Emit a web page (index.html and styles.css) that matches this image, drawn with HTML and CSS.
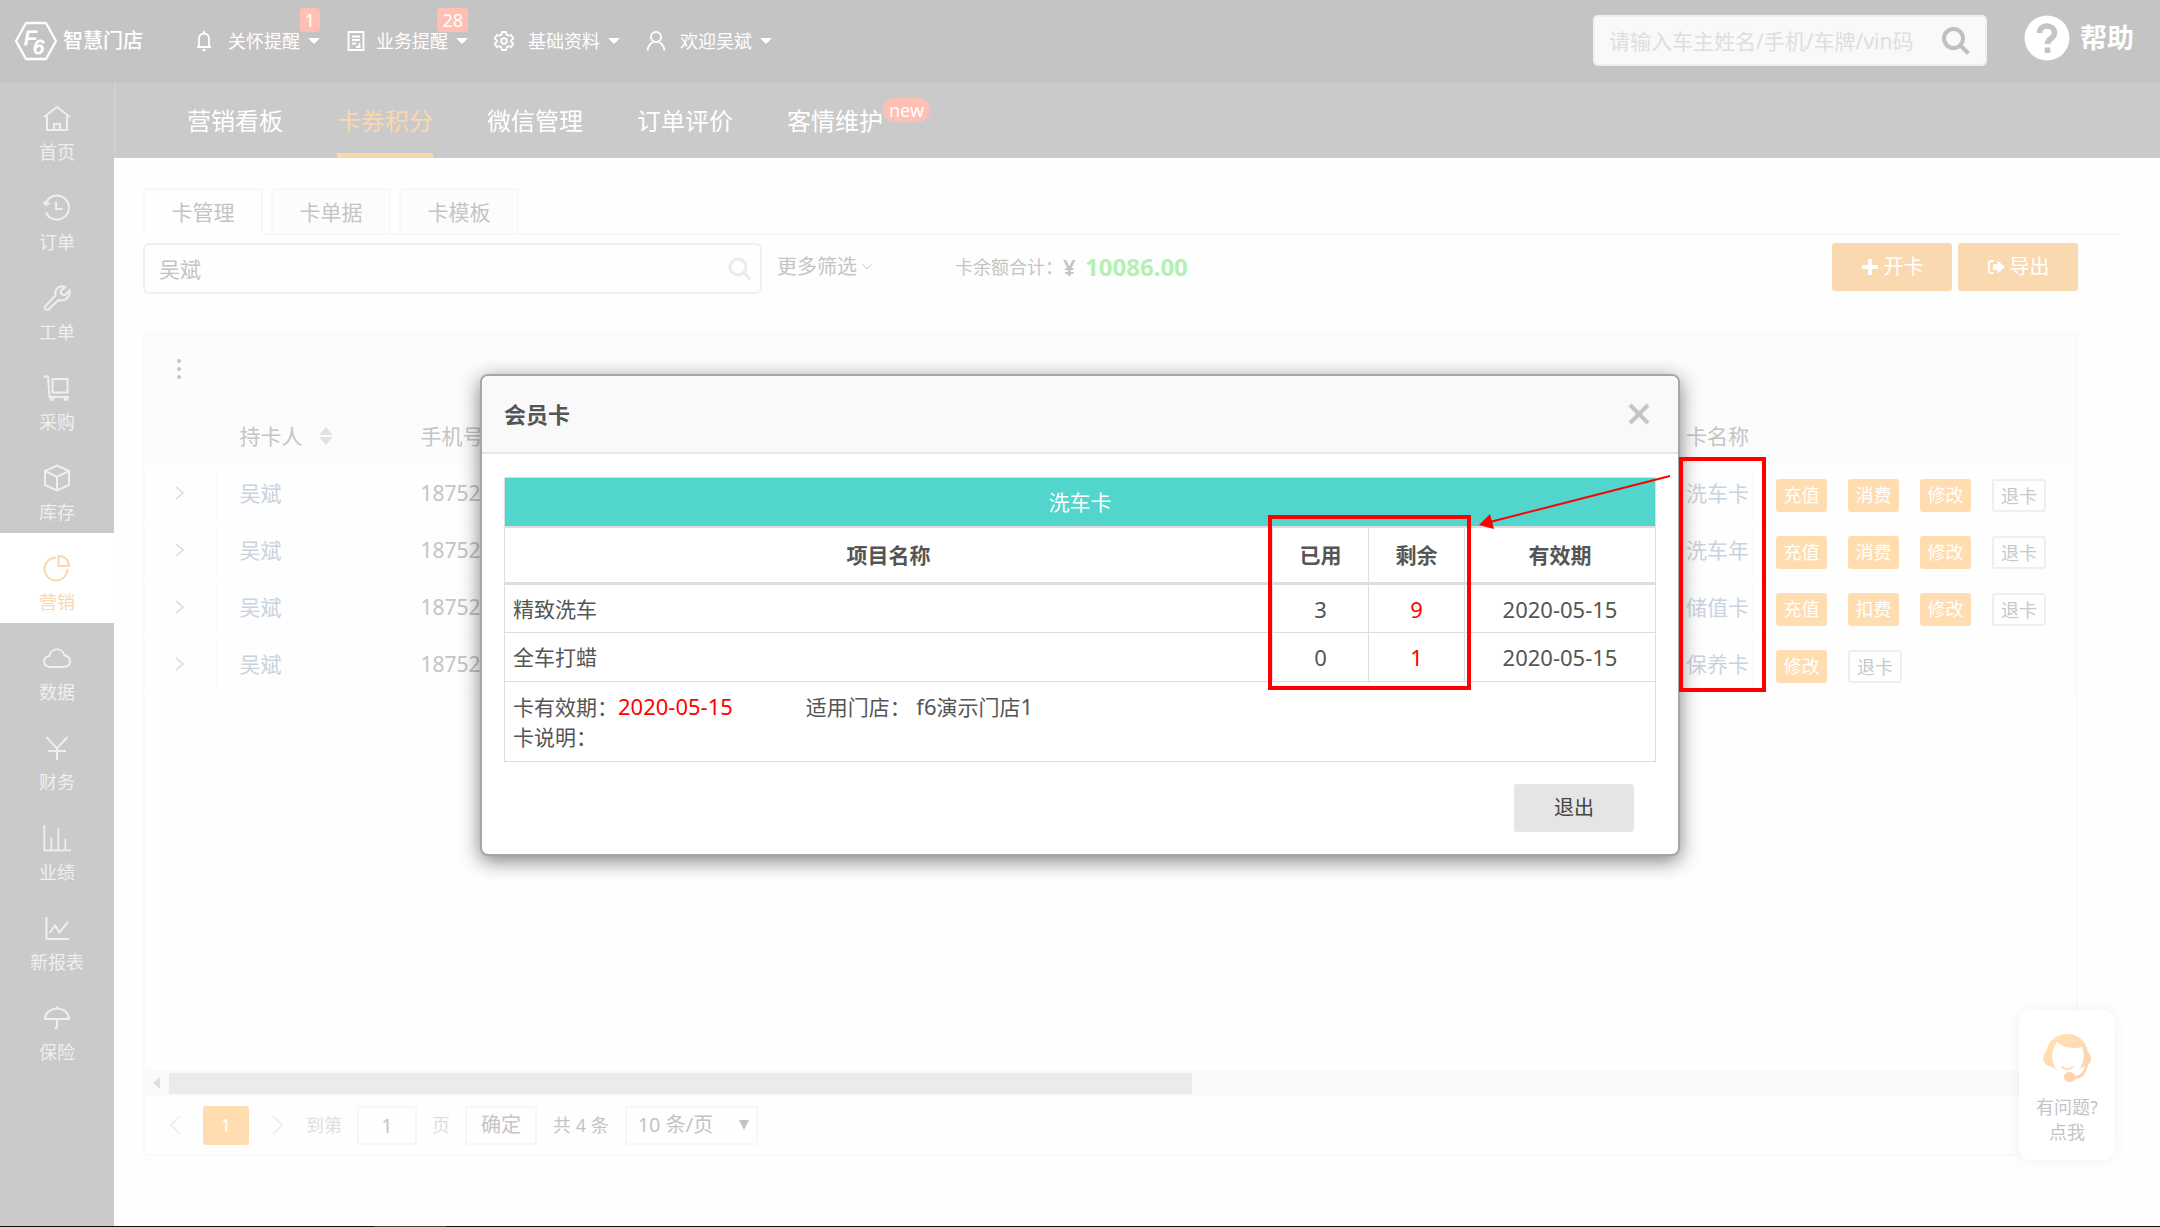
FILE: index.html
```html
<!DOCTYPE html>
<html lang="zh-CN">
<head>
<meta charset="utf-8">
<meta name="viewport" content="width=device-width, initial-scale=1">
<title>智慧门店 - 卡券积分</title>
<link rel="stylesheet" href="styles.css">
</head>
<body>
<header class="topbar">
  <a class="brand" href="#">
    <svg class="brand-mark" viewBox="0 0 44 40" aria-hidden="true">
      <path d="M12 2h20l10 18-10 18H12L2 20z" fill="none" stroke="#fff" stroke-width="2.4" stroke-linejoin="round"/>
      <text x="10" y="24" class="brand-letter">F</text>
      <text x="19" y="33" class="brand-letter">6</text>
    </svg>
    <span class="brand-name">智慧门店</span>
  </a>
  <nav class="topnav">
    <a class="topnav-item" href="#">
      <svg class="ico" viewBox="0 0 20 20"><path d="M10 0v2M5 16V7.500a5 5 0 0 1 10 0V16M3 16h14M8.500 19h3"/></svg>
      <span>关怀提醒</span><i class="caret"></i><b class="badge">1</b>
    </a>
    <a class="topnav-item topnav-item-tight" href="#">
      <svg class="ico" viewBox="0 0 20 20"><path d="M2.500 1h15v18h-15zM6 5.500h8M6 9h8M6 12.500h4M13.500 12v4H10"/></svg>
      <span>业务提醒</span><i class="caret"></i><b class="badge">28</b>
    </a>
    <a class="topnav-item" href="#">
      <svg class="ico" viewBox="0 0 20 20"><path d="M8 1h4l.6 2.600 2 1.200 2.600-.8 2 3.400-2 1.900v1.400l2 1.900-2 3.400-2.600-.8-2 1.200L12 19H8l-.6-2.600-2-1.200-2.600.8-2-3.400 2-1.900V9.300l-2-1.900 2-3.400 2.600.8 2-1.200z"/><circle cx="10" cy="10" r="2.800"/></svg>
      <span>基础资料</span><i class="caret"></i>
    </a>
    <a class="topnav-item" href="#">
      <svg class="ico" viewBox="0 0 20 20"><circle cx="10" cy="6" r="5"/><path d="M1.500 19.500c.5-5 3-7 5.500-8.500M18.500 19.500c-.5-5-3-7-5.500-8.500"/></svg>
      <span>欢迎吴斌</span><i class="caret"></i>
    </a>
  </nav>
  <form class="global-search">
    <input type="text" aria-label="搜索" placeholder="请输入车主姓名/手机/车牌/vin码">
    <button type="button" aria-label="搜索"><svg viewBox="0 0 30 30"><circle cx="12.500" cy="12.500" r="9.500"/><path d="M19.500 19.500l8 8"/></svg></button>
  </form>
  <a class="help" href="#">
    <svg viewBox="0 0 46 46" aria-hidden="true"><circle cx="23" cy="23" r="22.500" fill="#fff"/><path d="M15.500 18c0-9.500 15-9 15 0 0 5.500-7 5.500-7 11" fill="none" stroke="#c4c4c4" stroke-width="5.500"/><path d="M20.700 32.500h5.600V38h-5.600z" fill="#c4c4c4"/></svg>
    <span>帮助</span>
  </a>
</header>

<div class="shell">
  <aside class="sidebar">
    <a class="side-item" href="#"><svg viewBox="0 0 28 28"><path d="M1 13L14 3l13 10M4 11.500V26h20V11.500M11 26v-6h6v6"/></svg>首页</a>
    <a class="side-item" href="#"><svg viewBox="0 0 28 28"><path d="M2.500 10a12 12 0 1 1 .5 8.500M.5 8l2.500 3 3.500-2M13 8v7h6.500"/></svg>订单</a>
    <a class="side-item" href="#"><svg viewBox="0 0 28 28"><path d="M22 3c-5-2-11 1.500-9.500 8.500L2 22.500c-1 3 2 4 3.500 3L15.500 16c6 2 12-2.500 11-9.500L22 11c-3 .5-5-2-4-4.500z"/></svg>工单</a>
    <a class="side-item" href="#"><svg viewBox="0 0 28 28"><path d="M.5 2.500H5L6.500 23H26M9.500 5h15v13.500h-15z"/><circle cx="9" cy="24.500" r="1.500"/><circle cx="23" cy="24.500" r="1.500"/></svg>采购</a>
    <a class="side-item" href="#"><svg viewBox="0 0 28 28"><path d="M14 1.500l12 5.500v14L14 26.500 2 21V7zM2 7l12 6 12-6M14 13v13.500"/></svg>库存</a>
    <a class="side-item side-item-active" href="#"><svg viewBox="0 0 28 28"><path d="M13 3.500A11.500 11.500 0 1 0 24.500 15M15.500 2v10H26c0-6-4.500-10-10.500-10z"/></svg>营销</a>
    <a class="side-item" href="#"><svg viewBox="0 0 28 28"><path d="M7 23C-1 22-.5 13 6.500 12 7.500 3.500 19.500 3 21.500 11.500c7 1 7.500 10.500 0 11.500z"/></svg>数据</a>
    <a class="side-item" href="#"><svg viewBox="0 0 28 28"><path d="M3.500 3L14 14.500 24.500 3M5 17h18M14 14.500V26"/></svg>财务</a>
    <a class="side-item" href="#"><svg class="wide" viewBox="0 0 32 32"><path d="M1.500 1v29H32M9.500 29V15M17.500 29V5M25.500 29V17"/></svg>业绩</a>
    <a class="side-item" href="#"><svg viewBox="0 0 28 28"><path d="M3.500 3v22H26M6.500 19L12 11.500l4.500 7L25 8"/></svg>新报表</a>
    <a class="side-item" href="#"><svg viewBox="0 0 28 28"><path d="M2 15C3 1 25 1 26 15zM14 4.500V2.500M14 15v7.500c0 1.500-1 2-2.500 2"/></svg>保险</a>
  </aside>

  <main class="main">
    <nav class="tabs">
      <a href="#">营销看板</a>
      <a href="#" class="tabs-active">卡券积分</a>
      <a href="#">微信管理</a>
      <a href="#">订单评价</a>
      <a href="#">客情维护<b class="new-badge">new</b></a>
    </nav>

    <section class="content">
      <nav class="subtabs">
        <a class="subtab-active" href="#">卡管理</a>
        <a href="#">卡单据</a>
        <a href="#">卡模板</a>
      </nav>
      <div class="filters">
        <div class="filter-search">
          <input type="text" aria-label="查询会员卡" value="吴斌">
          <svg viewBox="0 0 24 24"><circle cx="10" cy="10" r="8"/><path d="M16 16l6.500 6.500"/></svg>
        </div>
        <a class="more" href="#">更多筛选<svg viewBox="0 0 12 12"><path d="M1.500 3.500L6 8l4.500-4.500"/></svg></a>
        <p class="total">卡余额合计：<span class="yen">¥</span><strong>10086.00</strong></p>
        <div class="filter-actions">
          <button type="button" class="btn-main"><svg viewBox="0 0 18 18"><path d="M7 1h4v6h6v4h-6v6H7v-6H1V7h6z"/></svg>开卡</button>
          <button type="button" class="btn-main"><svg viewBox="0 0 18 18"><path d="M7 2H4a3 3 0 0 0-3 3v8a3 3 0 0 0 3 3h3v-2H4.500A1.500 1.500 0 0 1 3 12.500v-7A1.500 1.500 0 0 1 4.500 4H7zM10.500 2.500L18 9l-7.500 6.500V12H6V6h4.500z"/></svg>导出</button>
        </div>
      </div>

      <div class="panel">
        <div class="panel-tools"><button type="button" class="dots" aria-label="列设置"><i></i><i></i><i></i></button></div>
        <table class="cards">
          <colgroup><col class="c-open"><col class="c-holder"><col><col class="c-name"><col class="c-act"></colgroup>
          <thead>
            <tr><th></th><th><span class="sortable">持卡人<svg viewBox="0 0 16 20"><path d="M8 1l7 8H1zM8 19l-7-8h14z"/></svg></span></th><th>手机号</th><th>卡名称</th><th></th></tr>
          </thead>
          <tbody>
            <tr><td><button type="button" class="open" aria-label="展开"><svg viewBox="0 0 12 16"><path d="M2 2l7 6-7 6"/></svg></button></td><td><a href="#">吴斌</a></td><td>18752</td><td><a href="#">洗车卡</a></td>
              <td><div class="acts"><button type="button">充值</button><button type="button">消费</button><button type="button">修改</button><button type="button" class="plain">退卡</button></div></td></tr>
            <tr><td><button type="button" class="open" aria-label="展开"><svg viewBox="0 0 12 16"><path d="M2 2l7 6-7 6"/></svg></button></td><td><a href="#">吴斌</a></td><td>18752</td><td><a href="#">洗车年</a></td>
              <td><div class="acts"><button type="button">充值</button><button type="button">消费</button><button type="button">修改</button><button type="button" class="plain">退卡</button></div></td></tr>
            <tr><td><button type="button" class="open" aria-label="展开"><svg viewBox="0 0 12 16"><path d="M2 2l7 6-7 6"/></svg></button></td><td><a href="#">吴斌</a></td><td>18752</td><td><a href="#">储值卡</a></td>
              <td><div class="acts"><button type="button">充值</button><button type="button">扣费</button><button type="button">修改</button><button type="button" class="plain">退卡</button></div></td></tr>
            <tr><td><button type="button" class="open" aria-label="展开"><svg viewBox="0 0 12 16"><path d="M2 2l7 6-7 6"/></svg></button></td><td><a href="#">吴斌</a></td><td>18752</td><td><a href="#">保养卡</a></td>
              <td><div class="acts"><button type="button">修改</button><button type="button" class="plain">退卡</button></div></td></tr>
          </tbody>
        </table>
        <div class="hscroll"><i class="hscroll-arrow"></i><div class="hscroll-thumb"></div></div>
        <div class="pager">
          <button type="button" class="page-step" aria-label="上一页"><svg viewBox="0 0 12 20"><path d="M11 1L2 10l9 9"/></svg></button>
          <button type="button" class="page-now">1</button>
          <button type="button" class="page-step" aria-label="下一页"><svg viewBox="0 0 12 20"><path d="M1 1l9 9-9 9"/></svg></button>
          <label class="page-jump">到第<input type="text" value="1">页</label>
          <button type="button" class="page-ok">确定</button>
          <span class="page-count">共 4 条</span>
          <span class="page-size"><select aria-label="每页条数"><option>10 条/页</option></select><svg viewBox="0 0 10 10"><path d="M0 0h10L5 10z"/></svg></span>
        </div>
      </div>
    </section>
  </main>
</div>
<div class="taskbar"><i></i></div>

<a class="service" href="#">
  <svg viewBox="0 0 48 48" aria-hidden="true">
    <defs><linearGradient id="hair" x1="0" y1="0" x2="1" y2="1"><stop offset="0" stop-color="#ffe6b3"/><stop offset="1" stop-color="#ffcdb0"/></linearGradient></defs>
    <path fill="url(#hair)" d="M24 0C13 0 5 7 3 18c-5 4-3 13 4 14l7 4c-6-7-7-18 0-28 7 6 16 7 25 5 3 8 2 16-3 22l6-3c-2 6-5 10-10 10-1-6-11-5-11 1s9 7 11 2c7 0 11-5 13-14 4-3 4-9 0-13C43 7 35 0 24 0z"/>
    <path d="M18.500 32.500c3.500 3.500 8 3.500 11.500 0" fill="none" stroke="#ffd9b3" stroke-width="2"/>
  </svg>
  <span>有问题?</span><span>点我</span>
</a>

<div class="overlay">
  <section class="dialog" role="dialog" aria-labelledby="dialog-title">
    <header class="dialog-head">
      <h2 id="dialog-title">会员卡</h2>
      <button type="button" aria-label="关闭"><svg viewBox="0 0 22 22"><path d="M2 2l18 18M20 2L2 20"/></svg></button>
    </header>
    <div class="dialog-body">
      <table class="detail">
        <colgroup><col><col class="d-num"><col class="d-num"><col class="d-date"></colgroup>
        <thead>
          <tr class="detail-title"><th colspan="4">洗车卡</th></tr>
          <tr class="detail-cols"><th>项目名称</th><th>已用</th><th>剩余</th><th>有效期</th></tr>
        </thead>
        <tbody>
          <tr><td>精致洗车</td><td class="num">3</td><td class="num red">9</td><td class="num">2020-05-15</td></tr>
          <tr><td>全车打蜡</td><td class="num">0</td><td class="num red">1</td><td class="num">2020-05-15</td></tr>
        </tbody>
        <tfoot>
          <tr><td colspan="4">
            <div class="detail-meta"><span>卡有效期：<em class="num red">2020-05-15</em></span><span>适用门店： <em class="num">f6</em>演示门店<em class="num">1</em></span></div>
            <div>卡说明：</div>
          </td></tr>
        </tfoot>
      </table>
    </div>
    <footer class="dialog-foot"><button type="button">退出</button></footer>
    <svg class="marks" viewBox="0 0 504 240" aria-hidden="true">
      <path d="M4 61h199v171H4zM415 3h83v231h-83z" fill="none" stroke="#f00" stroke-width="4"/>
      <path d="M404 20L224 66" fill="none" stroke="#f00" stroke-width="2"/>
      <path d="M213 69l11-11 4 15z" fill="#f00"/>
    </svg>
  </section>
</div>
</body>
</html>
```
FILE: styles.css
```css
* { box-sizing: border-box; }

body {
  margin: 0;
  min-height: 100vh;
  display: flex;
  flex-direction: column;
  position: relative;
  background: #fefefe;
  color: #c4c4c4;
  font-family: "Noto Sans", "Noto Sans CJK SC", sans-serif;
  font-size: 21px;
  line-height: 30px;
}

a { color: inherit; text-decoration: none; }
button, input, select { font: inherit; color: inherit; margin: 0; padding: 0; border: 0; background: none; }
svg { display: block; flex: none; }
i, em { font-style: normal; }

/* top bar */
.topbar {
  height: 83px;
  display: flex;
  align-items: center;
  padding: 0 26px 2px 14px;
  background: #c4c4c4;
  color: #fff;
}
.brand { display: flex; align-items: center; gap: 5px; width: 180px; }
.brand-mark { width: 44px; height: 40px; }
.brand-letter { font: italic 20px "Liberation Sans", sans-serif; fill: #fff; stroke: #fff; stroke-width: 1; }
.brand-name { font-size: 20px; font-weight: 500; white-space: nowrap; }
.topnav { display: flex; gap: 26px; font-size: 18px; line-height: 24px; white-space: nowrap; }
.topnav-item { position: relative; display: flex; align-items: center; gap: 14px; }
.topnav-item-tight { gap: 10px; }
.ico { width: 20px; height: 20px; fill: none; stroke: #fff; stroke-width: 1.8; }
.caret { width: 12px; border: 6px solid transparent; border-top-color: #fff; border-bottom: 0; }
.topnav-item .caret { margin-left: -6px; }
.topnav-item-tight .caret { margin-left: -2px; }
.badge {
  position: absolute;
  right: 0;
  top: -21px;
  padding: 0 5px;
  border-radius: 4px;
  background: #ffc0b3;
  font-weight: 400;
}
.global-search {
  display: flex;
  align-items: center;
  width: 394px;
  height: 51px;
  margin: 0 37px 0 auto;
  padding: 0 14px;
  border: 2px solid #efefef;
  border-radius: 5px;
  background: #f9f9f9;
}
.global-search input { flex: 1; min-width: 0; font-size: 21px; outline: 0; }
.global-search input::placeholder { color: #dedede; opacity: 1; }
.global-search svg { width: 30px; height: 30px; fill: none; stroke: #c0c0c0; stroke-width: 4; }
.help { display: flex; align-items: center; gap: 10px; padding-bottom: 6px; font-size: 27px; font-weight: 700; white-space: nowrap; }
.help svg { width: 46px; height: 46px; }

/* side bar */
.shell { flex: 1; display: flex; }
.sidebar { flex: none; width: 114px; background: #cacaca; color: #efefef; font-size: 18px; line-height: 24px; }
.side-item { display: flex; flex-direction: column; align-items: center; justify-content: center; gap: 8px; height: 90px; padding-top: 12px; }
.side-item svg { width: 28px; height: 28px; fill: none; stroke: currentColor; stroke-width: 2; }
.side-item .wide { width: 32px; }
.side-item-active { background: #fff; color: #fbd7ae; }

/* module tabs */
.main { flex: 1; min-width: 0; display: flex; flex-direction: column; }
.tabs {
  display: flex;
  gap: 54px;
  height: 75px;
  padding-left: 71px;
  border-left: 2px solid #d0d0d0;
  background: #cacaca;
  color: #fff;
  font-size: 24px;
  line-height: 76px;
}
.tabs a { position: relative; height: 75px; white-space: nowrap; }
.tabs-active { color: #fbd7ae; box-shadow: inset 0 -5px #fbd7ae; }
.new-badge {
  position: absolute;
  left: 100%;
  top: 15px;
  padding: 0 6px;
  border-radius: 12px;
  background: #ffc0b3;
  font-size: 18px;
  font-weight: 400;
  line-height: 24px;
}

/* filters */
.content { flex: 1; display: flex; flex-direction: column; padding: 30px 82px 70px 29px; }
.subtabs { display: flex; gap: 8px; margin-right: -45px; border-bottom: 2px solid #f9f9f9; }
.subtabs a { width: 120px; height: 47px; margin-bottom: -2px; border: 2px solid #f8f8f8; background: #fcfcfc; line-height: 44px; text-align: center; }
.subtabs .subtab-active { background: #fefefe; border-bottom-color: #fefefe; }
.filters { display: flex; align-items: flex-start; margin: 8px 0 38px; line-height: 48px; }
.filter-search { display: flex; align-items: center; width: 619px; height: 51px; padding: 0 8px 0 14px; border: 2px solid #f0f0f0; border-radius: 6px; }
.filter-search input { flex: 1; min-width: 0; outline: 0; }
.filter-search svg { width: 24px; height: 24px; fill: none; stroke: #ebebeb; stroke-width: 3; }
.more { display: flex; align-items: center; gap: 4px; width: 178px; margin-left: 15px; font-size: 20px; }
.more svg { width: 12px; height: 12px; fill: none; stroke: #c4c4c4; stroke-width: 1; }
.total { display: flex; margin: 0; font-size: 18px; line-height: 48px; }
.yen { width: 22px; font-size: 22px; font-weight: 600; }
.total strong { color: #b3f0b3; font-size: 24px; }
.filter-actions { display: flex; gap: 6px; margin-left: auto; }
.btn-main {
  display: flex;
  align-items: center;
  justify-content: center;
  gap: 5px;
  width: 120px;
  height: 48px;
  border-radius: 3px;
  background: #fbd9b0;
  color: #fff;
  font-size: 20px;
}
.btn-main svg { width: 18px; height: 18px; fill: #fff; }

/* card list */
.panel { flex: 1; display: flex; flex-direction: column; border: 2px solid #fafafa; border-top-width: 1px; }
.panel-tools { height: 74px; background: #fcfcfc; }
.dots { display: grid; gap: 4px; padding: 26px 32px; }
.dots i { width: 4px; height: 4px; border-radius: 2px; background: #c4c4c4; }
.cards { width: 100%; table-layout: fixed; border-collapse: collapse; }
.c-open { width: 71px; }
.c-holder { width: 181px; }
.c-name { width: 90px; }
.c-act { width: 323px; }
.cards th, .cards td {
  height: 57px;
  padding: 0 0 0 23px;
  border: 1px solid #fafafa;
  border-left: 0;
  text-align: left;
  white-space: nowrap;
  font-weight: 400;
}
.cards th { background: #fcfcfc; }
.cards td a { color: #c9d3de; }
.cards td:first-child { padding-left: 29px; }
.cards td:last-child { padding-top: 4px; }
.open svg { width: 12px; height: 16px; fill: none; stroke: #dadada; stroke-width: 1.5; }
.sortable { display: flex; align-items: center; gap: 15px; }
.sortable svg { width: 16px; height: 20px; fill: #e2e2e2; }
.acts { display: flex; gap: 21px; font-size: 18px; line-height: 32px; }
.acts button { width: 51px; height: 33px; border-radius: 3px; background: #ffddb0; color: #fff; }
.acts .plain { width: 54px; border: 2px solid #efefef; background: #fefefe; color: #c8c8c8; line-height: 30px; }

.hscroll { display: flex; align-items: center; height: 26px; margin-top: auto; background: #fafafa; }
.hscroll-arrow { width: 7px; margin: 0 9px 0 8px; border: 6px solid transparent; border-right: 7px solid #dedede; border-left: 0; }
.hscroll-thumb { width: 53%; height: 21px; background: #ebebeb; }

.pager { display: flex; align-items: center; height: 58px; padding-left: 24px; font-size: 18px; color: #dedede; white-space: nowrap; }
.pager button, .pager input, .pager select { height: 39px; border-radius: 3px; }
.page-step svg { width: 12px; height: 20px; fill: none; stroke: #efefef; stroke-width: 2; }
.pager .page-now { width: 46px; margin: 0 23px 0 22px; background: #ffddb0; color: #fff; }
.page-jump { display: flex; align-items: center; gap: 15px; margin: 0 15px 0 22px; }
.page-jump input { width: 60px; border: 2px solid #f6f6f6; color: #c4c4c4; font-size: 20px; text-align: center; }
.pager .page-ok { width: 72px; border: 2px solid #f6f6f6; color: #c4c4c4; font-size: 20px; }
.page-count { margin: 0 16px; color: #c4c4c4; }
.page-size { display: flex; align-items: center; color: #c4c4c4; font-size: 20px; }
.page-size select { appearance: none; width: 133px; padding-left: 11px; border: 2px solid #f6f6f6; }
.page-size svg { width: 10px; height: 10px; margin-left: -19px; fill: #c4c4c4; pointer-events: none; }

/* customer service entry */
.service {
  position: absolute;
  right: 45px;
  bottom: 67px;
  display: flex;
  flex-direction: column;
  align-items: center;
  width: 96px;
  height: 150px;
  padding-top: 24px;
  border-radius: 12px;
  background: #fff;
  box-shadow: 0 0 14px rgba(0, 0, 0, .06);
  font-size: 18px;
  line-height: 25px;
}
.service svg { width: 48px; height: 48px; margin-bottom: 13px; }

.taskbar { height: 1px; padding-left: 374px; background: #111; }
.taskbar i { display: block; width: 72px; height: 1px; background: #444; }

/* member card dialog */
.overlay { position: absolute; inset: 0; display: flex; align-items: flex-start; justify-content: center; padding-top: 374px; }
.dialog {
  position: relative;
  width: 1200px;
  border: 2px solid #a6a6a6;
  border-radius: 8px;
  background: #fff;
  box-shadow: 0 5px 20px rgba(0, 0, 0, .5);
  color: #555;
}
.dialog-head { display: flex; align-items: center; justify-content: space-between; height: 78px; padding: 0 28px 0 22px; border-bottom: 2px solid #e5e5e5; border-radius: 6px 6px 0 0; background: #f9f9f9; }
.dialog-head h2 { margin: 0; font-size: 22px; font-weight: 700; }
.dialog-head svg { width: 22px; height: 22px; fill: none; stroke: #c5c5c5; stroke-width: 4; }
.dialog-body { padding: 23px 22px 22px; }
.detail { width: 100%; table-layout: fixed; border-collapse: collapse; }
.d-num { width: 96px; }
.d-date { width: 191px; }
.detail th, .detail td { height: 49px; padding: 0 8px; border: 1px solid #ddd; text-align: center; }
.detail td:first-child { text-align: left; }
.detail .detail-title th { background: #51d5cc; color: #fff; font-weight: 400; }
.detail .detail-cols th { height: 57px; border-top-width: 2px; border-bottom-width: 3px; }
.detail tfoot td { height: 80px; }
.detail-meta { display: flex; gap: 73px; }
.detail .num { font-size: 22px; }
.red { color: #f00; }
.dialog-foot { display: flex; justify-content: flex-end; padding: 0 44px 22px; }
.dialog-foot button { width: 120px; height: 48px; border-radius: 3px; background: #e5e5e5; color: #444; font-size: 20px; }
.marks { position: absolute; left: 784px; top: 80px; width: 504px; height: 240px; }
```
